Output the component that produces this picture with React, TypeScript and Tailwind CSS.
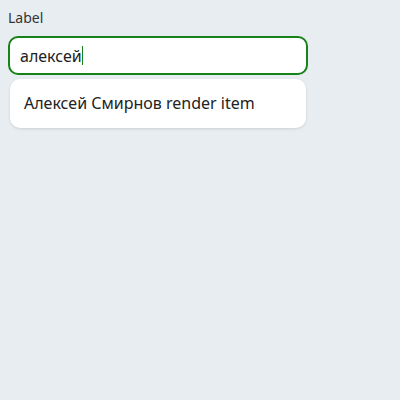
export default function App() {
  return (
    <div className="min-h-[400px] w-[400px] bg-[#e8edf2] p-2 font-['Noto_Sans',sans-serif] text-[#222]">
      <div className="w-[300px]">
        <label className="block text-[14px] leading-[19px] text-[#333]">Label</label>
        <div className="mt-[9px] h-[39px] rounded-[10px] border-2 border-[#178217] bg-white flex items-center px-[10px]">
          <span className="text-[16px]">алексей</span>
          <span className="w-[1px] h-[19px] bg-[#178217]" />
        </div>
        <div className="mx-[2px] mt-[4px] rounded-[10px] bg-white shadow-[0_1px_3px_rgba(0,0,0,0.12)] px-[14px] py-[12px] h-[49px]">
          <span className="text-[16px] leading-[24px]">Алексей Смирнов render item</span>
        </div>
      </div>
    </div>
  );
}
